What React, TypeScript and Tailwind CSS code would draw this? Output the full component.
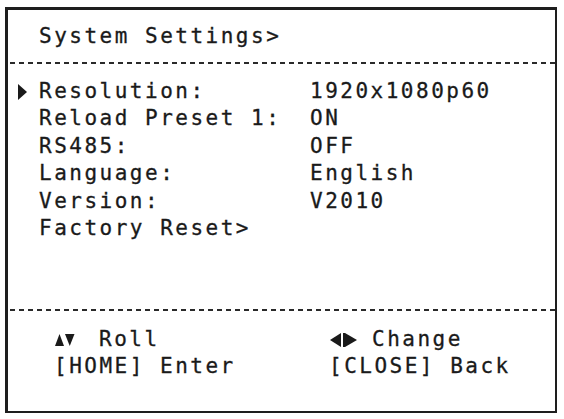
import React from "react";

interface MenuRow {
  label: string;
  value?: string;
  selected?: boolean;
}

const rows: MenuRow[] = [
  { label: "Resolution:", value: "1920x1080p60", selected: true },
  { label: "Reload Preset 1:", value: "ON" },
  { label: "RS485:", value: "OFF" },
  { label: "Language:", value: "English" },
  { label: "Version:", value: "V2010" },
  { label: "Factory Reset>" },
];

const Dashes = () => (
  <div className="ml-[2px] h-[2px] bg-[image:repeating-linear-gradient(90deg,#2a2a2a_0px,#2a2a2a_5px,transparent_5px,transparent_9px)]" />
);

const App: React.FC = () => {
  return (
    <div className="w-[564px] h-[419px] bg-white pt-[7px] pl-[5px] text-[#1a1a1a] font-['DejaVu_Sans_Mono',monospace] text-[21px] tracking-[2.5px] [-webkit-text-stroke:0.3px_#1a1a1a]">
      <div className="w-[552px] h-[406px] border-l-[3px] border-t-[3px] border-r-2 border-b-2 border-[#1e1e1e] flex flex-col">
        {/* title */}
        <div className="mt-[13px] pl-[31px] h-[27px] leading-[27px] whitespace-pre">System Settings&gt;</div>
        <div className="mt-[12px]">
          <Dashes />
        </div>

        <div className="mt-[14px] flex flex-col">
          {rows.map((row, index) => (
            <div key={index} className="flex items-center h-[27.4px] leading-[27.4px] whitespace-pre">
              <div className="w-[31px] flex items-center">
                {row.selected && (
                  <svg width="9" height="16" viewBox="0 0 9 16" className="ml-[10px]">
                    <polygon points="0,0 9,8 0,16" fill="#1a1a1a" />
                  </svg>
                )}
              </div>
              <span className="w-[271px]">{row.label}</span>
              <span>{row.value}</span>
            </div>
          ))}
        </div>

        <div className="mt-[67px]">
          <Dashes />
        </div>

        {/* key help */}
        <div className="mt-[15px] pl-[46px] flex whitespace-pre">
          <div className="w-[275px] flex flex-col">
            <div className="flex items-center h-[27px] leading-[27px]">
              <span className="w-[45px] flex items-center">
                <svg width="20" height="12" viewBox="0 0 20 12" className="ml-[1px]">
                  <polygon points="0,12 4.5,0 9,12" fill="#1a1a1a" />
                  <polygon points="10,0 19.5,0 14.75,12" fill="#1a1a1a" />
                </svg>
              </span>
              <span>Roll</span>
            </div>
            <div className="h-[27px] leading-[27px]">[HOME] Enter</div>
          </div>
          <div className="flex flex-col">
            <div className="flex items-center h-[27px] leading-[27px]">
              <span className="w-[43px] flex items-center">
                <svg width="28" height="14" viewBox="0 0 28 14" className="ml-[1px]">
                  <polygon points="11,0 0,7 11,14" fill="#1a1a1a" />
                  <rect x="13" y="0" width="2" height="14" fill="#1a1a1a" />
                  <polygon points="15,0 27,7 15,14" fill="#1a1a1a" />
                </svg>
              </span>
              <span>Change</span>
            </div>
            <div className="h-[27px] leading-[27px]">[CLOSE] Back</div>
          </div>
        </div>
      </div>
    </div>
  );
};

export default App;
